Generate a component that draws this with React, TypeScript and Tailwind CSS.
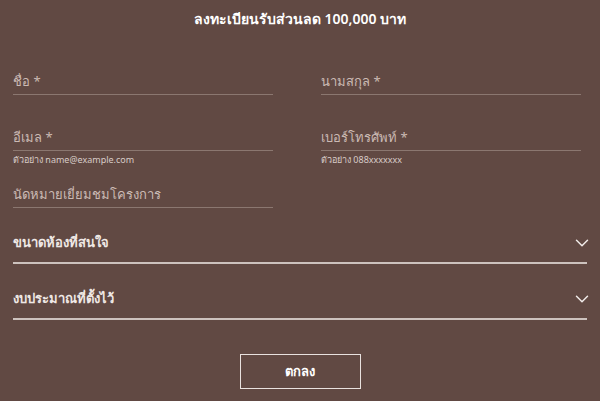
import { ChevronDown } from "lucide-react";

type FieldProps = {
  label: string;
  hint?: string;
};

function Field({ label, hint }: FieldProps) {
  return (
    <div className="flex flex-col">
      <div className="flex h-[28px] items-end border-b border-[#8b7770] pb-[3px] text-[13px] leading-[20px] text-[#cbbab4]">
        {label}
      </div>
      {hint && <div className="mt-[3px] text-[9px] leading-[12px] text-[#d8ccc8]">{hint}</div>}
    </div>
  );
}

function SelectRow({ label }: { label: string }) {
  return (
    <div className="flex h-[56px] items-center justify-between border-b-2 border-[#cdc2be] pt-[16px]">
      <span className="text-[13px] font-semibold text-[#efe8e5]">{label}</span>
      <ChevronDown className="mr-[-6px] h-[22px] w-[22px] text-[#f1ebe9]" strokeWidth={1.6} />
    </div>
  );
}

export default function App() {
  return (
    <div
      className="flex h-[401px] w-[600px] flex-col bg-[#614943] px-[13px] pt-[9px]"
      style={{ fontFamily: "'Noto Sans', 'Open Sans', sans-serif" }}
    >
      <h1 className="text-center text-[14px] font-semibold leading-[20px] text-white">
        ลงทะเบียนรับส่วนลด 100,000 บาท
      </h1>

      <div className="mt-[38px] grid grid-cols-2 gap-x-[48px] pr-[6px]">
        <Field label="ชื่อ *" />
        <Field label="นามสกุล *" />
      </div>

      <div className="mt-[28px] grid grid-cols-2 gap-x-[48px] pr-[6px]">
        <Field label="อีเมล *" hint="ตัวอย่าง name@example.com" />
        <Field label="เบอร์โทรศัพท์ *" hint="ตัวอย่าง 088xxxxxxx" />
      </div>

      <div className="mt-[14px] grid grid-cols-2 gap-x-[48px] pr-[6px]">
        <Field label="นัดหมายเยี่ยมชมโครงการ" />
      </div>

      <div className="flex flex-col">
        <SelectRow label="ขนาดห้องที่สนใจ" />
        <SelectRow label="งบประมาณที่ตั้งไว้" />
      </div>

      <div className="mt-[34px] flex justify-center">
        <button className="h-[35px] w-[121px] border border-[#e9e2df] text-[13px] font-bold text-white">
          ตกลง
        </button>
      </div>
    </div>
  );
}
